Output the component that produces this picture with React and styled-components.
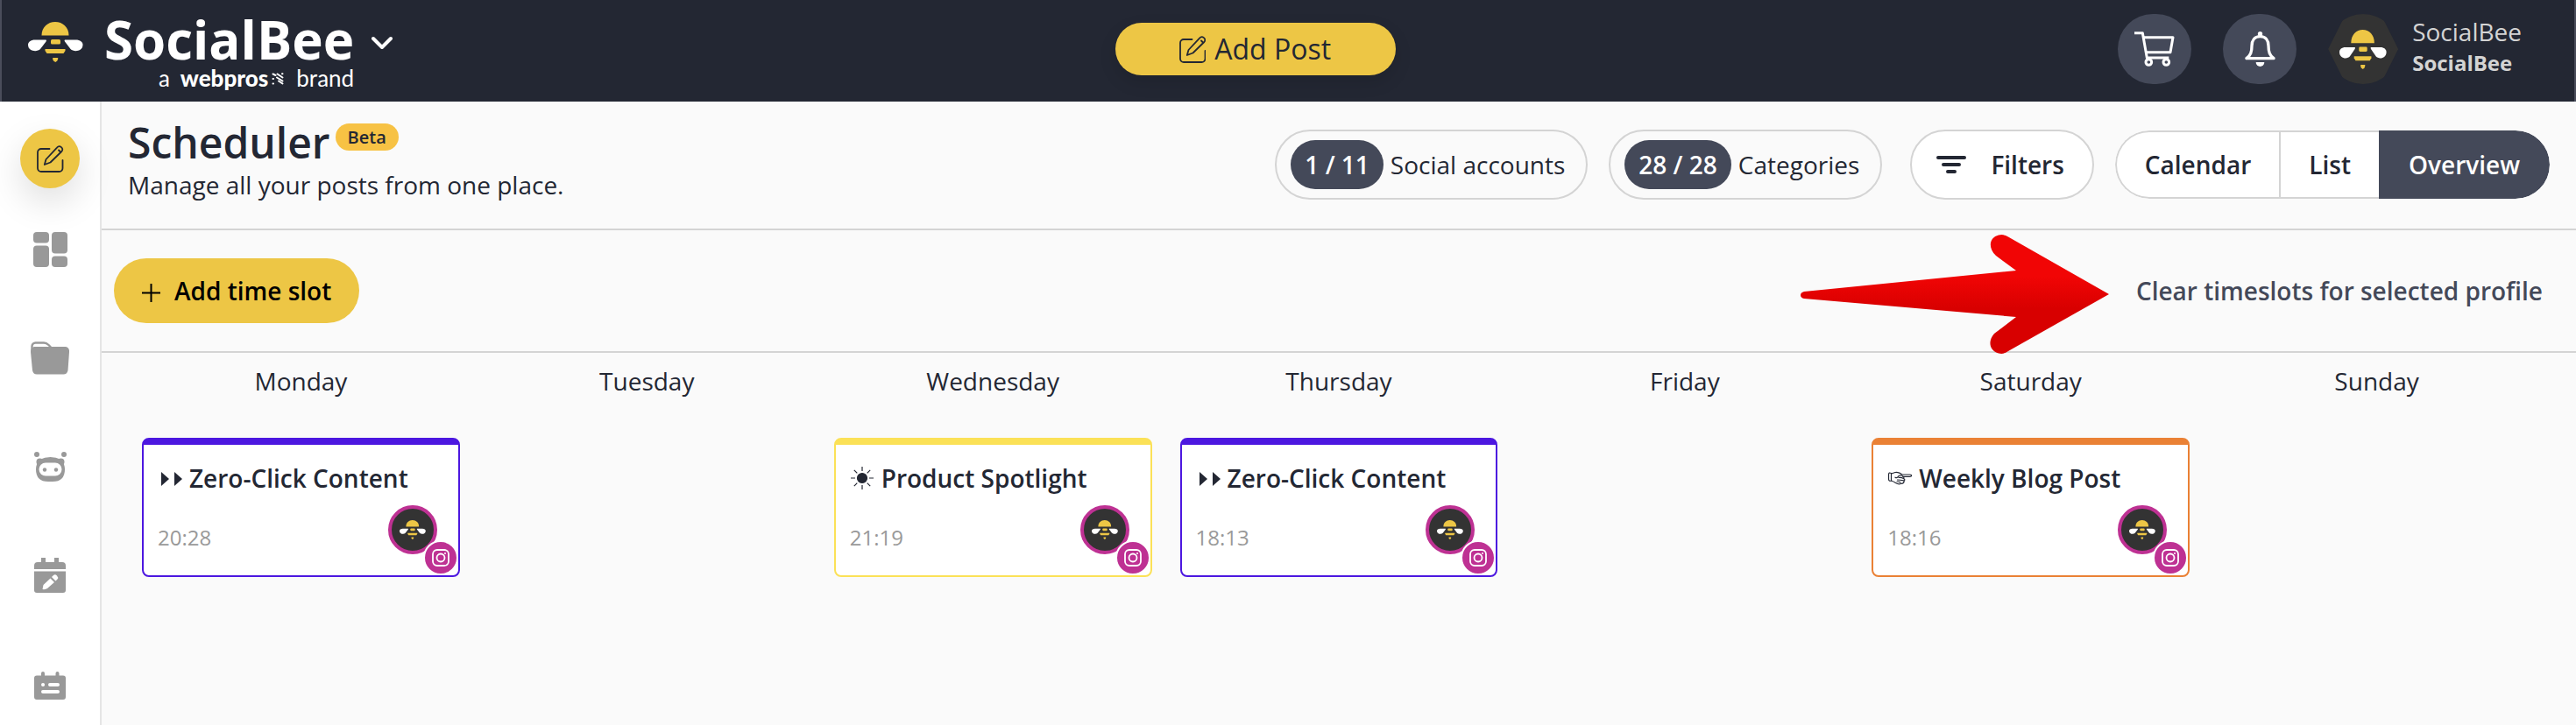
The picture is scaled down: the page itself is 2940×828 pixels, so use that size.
import styled, { createGlobalStyle } from "styled-components";

const GlobalStyle = createGlobalStyle`
   *{
      box-sizing: border-box;
   }
   body{
      margin: 0;
      background: #fafafa;
      color: #232733;
      font-family: "Open Sans", "Noto Sans", sans-serif;
      font-size: 28px;
      line-height: 38px;
   }
   button{
      font: inherit;
      color: inherit;
      border: none;
      margin: 0;
      padding: 0;
      background: none;
      cursor: pointer;
      white-space: nowrap;
   }
   a{
      color: inherit;
      text-decoration: none;
   }
   svg{
      display: block;
      flex-shrink: 0;
   }
   h1, h2, h3, p{
      margin: 0;
      font-size: inherit;
      font-weight: inherit;
   }
`
const Page = styled.div`
   min-height: 100vh;
   display: flex;
   flex-direction: column;
`
const TopBar = styled.header`
   height: 116px;
   padding: 0 60px 0 30px;
   display: flex;
   align-items: center;
   justify-content: space-between;
   background: #232733;
   border: solid #4a4d5b;
   border-width: 0 2px;
`
const Brand = styled.button`
   display: flex;
   align-items: flex-start;
   padding-top: 2px;
   color: white;
`
const BeeMark = styled.svg`
   margin-top: 10px;
`
const BrandText = styled.span`
   display: flex;
   flex-direction: column;
   align-items: flex-end;
   margin-left: 24px;
   margin-right: 20px;
`
const BrandName = styled.span`
   font-size: 60px;
   line-height: 60px;
   font-weight: 700;
`
const BrandTag = styled.span`
   display: flex;
   align-items: center;
   font-family: Lato, sans-serif;
   font-size: 26px;
   line-height: 28px;
   b{
      font-weight: 900;
      margin-left: 12px;
   }
   svg{
      margin: 2px 14px 0 4px;
   }
`
const Chevron = styled.svg`
   margin-top: 26px;
`
const BtnAddPost = styled.button`
   display: flex;
   align-items: center;
   justify-content: center;
   gap: 10px;
   width: 320px;
   height: 60px;
   margin-bottom: 4px;
   border-radius: 30px;
   background: #edc645;
   font-size: 32px;
   box-shadow: 0 8px 20px rgba(0, 0, 0, 0.12);
`
const Account = styled.div`
   display: flex;
   align-items: center;
   gap: 36px;
   margin-bottom: 4px;
`
const BtnRound = styled.button`
   display: flex;
   align-items: center;
   justify-content: center;
   width: 84px;
   height: 80px;
   border-radius: 40px;
   background: #444959;
`
const Profile = styled.a`
   display: flex;
   align-items: center;
   gap: 16px;
   color: #d4d4d4;
`
const HexAvatar = styled.span`
   display: flex;
   width: 80px;
   height: 80px;
   border-radius: 50%;
   overflow: hidden;
   span{
      display: flex;
      flex: 1;
      align-items: center;
      justify-content: center;
      background: #333;
      clip-path: polygon(25% 0, 75% 0, 100% 50%, 75% 100%, 25% 100%, 0 50%);
   }
`
const ProfileName = styled.span`
   display: flex;
   flex-direction: column;
   margin-bottom: 6px;
   b{
      font-size: 24px;
      line-height: 34px;
   }
`
const Body = styled.div`
   flex: 1;
   display: flex;
`
const SideBar = styled.nav`
   flex: 0 0 116px;
   display: flex;
   flex-direction: column;
   align-items: center;
   gap: 84px;
   padding-top: 31px;
   background: white;
   border-right: 2px solid #e5e5e5;
`
const SideLink = styled.a`
   display: flex;
   align-items: center;
   justify-content: center;
   height: 40px;
   color: #999;
`
const BtnCompose = styled.button`
   display: flex;
   align-items: center;
   justify-content: center;
   width: 68px;
   height: 68px;
   margin-bottom: -34px;
   border-radius: 50%;
   background: #edc645;
   box-shadow: 0 16px 40px rgba(0, 0, 0, 0.13);
`
const Main = styled.main`
   flex: 1;
   min-width: 0;
`
const PageHead = styled.section`
   display: flex;
   align-items: center;
   justify-content: space-between;
   height: 147px;
   padding: 0 30px;
   border-bottom: 2px solid #d4d4d4;
`
const Heading = styled.div`
   align-self: flex-start;
   padding-top: 18px;
`
const Title = styled.h1`
   display: flex;
   align-items: flex-start;
   gap: 6px;
   font-size: 48px;
   line-height: 58px;
   font-weight: 600;
`
const Beta = styled.span`
   margin-top: 7px;
   padding: 0 14px;
   border-radius: 16px;
   background: #f7c244;
   font-size: 20px;
   line-height: 31px;
`
const Controls = styled.div`
   display: flex;
   align-items: center;
   gap: 24px;
   margin-bottom: 2px;
`
const Pill = styled.button`
   display: flex;
   align-items: center;
   gap: 8px;
   height: 80px;
   padding: 0 24px 0 16px;
   border: 2px solid #d4d4d4;
   border-radius: 40px;
`
const Count = styled.span`
   padding: 0 16px;
   border-radius: 28px;
   background: #444959;
   color: white;
   font-weight: 600;
   line-height: 56px;
`
const BtnFilters = styled.button`
   display: flex;
   align-items: center;
   gap: 28px;
   height: 80px;
   margin-left: 8px;
   padding: 0 32px 0 28px;
   border: 2px solid #d4d4d4;
   border-radius: 40px;
   background: white;
   font-weight: 600;
`
const ViewSwitch = styled.div`
   display: flex;
   height: 78px;
   border-radius: 39px;
   overflow: hidden;
`
const BtnView = styled.button`
   padding: 0 32px;
   border: 2px solid ${({ $active }) => ($active ? "#444959" : "#d4d4d4")};
   border-right-width: ${({ $active }) => ($active ? "2px" : "0")};
   background: ${({ $active }) => ($active ? "#444959" : "white")};
   color: ${({ $active }) => ($active ? "white" : "#232733")};
   font-weight: 600;
   &:first-child{
      border-radius: 39px 0 0 39px;
   }
   &:last-child{
      border-radius: 0 39px 39px 0;
   }
`
const Toolbar = styled.section`
   display: flex;
   align-items: center;
   justify-content: space-between;
   height: 140px;
   padding: 0 38px 0 14px;
   border-bottom: 2px solid #d4d4d4;
`
const BtnAddSlot = styled.button`
   display: flex;
   align-items: center;
   gap: 16px;
   height: 74px;
   padding: 0 32px;
   border-radius: 37px;
   background: #edc645;
   color: black;
   font-weight: 600;
   svg{
      margin-top: 4px;
   }
`
const ClearBox = styled.div`
   position: relative;
`
const BtnClear = styled.button`
   color: #444959;
   font-weight: 600;
`
const Pointer = styled.svg`
   position: absolute;
   right: 100%;
   top: 50%;
   margin-right: 31px;
   transform: translateY(-50%);
`
const Week = styled.section`
   display: grid;
   grid-template-columns: repeat(7, 1fr);
   padding: 13px 30px;
`
const Day = styled.div`
   display: flex;
   flex-direction: column;
   gap: 46px;
   padding: 0 16px;
`
const DayName = styled.h2`
   text-align: center;
`
const Card = styled.article`
   padding: 19px 24px 24px 16px;
   border: 2px solid ${({ $color }) => $color};
   border-top-width: 8px;
   border-radius: 8px;
   background: white;
`
const CardTitle = styled.h3`
   display: flex;
   align-items: center;
   gap: 8px;
   font-weight: 600;
   white-space: nowrap;
`
const CardFoot = styled.div`
   display: flex;
   align-items: flex-end;
   justify-content: space-between;
   margin-top: 12px;
   color: #999;
   font-size: 24px;
`
const Avatar = styled.span`
   position: relative;
   display: flex;
   align-items: center;
   justify-content: center;
   width: 56px;
   height: 56px;
   border: 4px solid #be3193;
   border-radius: 50%;
   background: #333;
`
const NetworkBadge = styled.span`
   position: absolute;
   right: -28px;
   bottom: -28px;
   display: flex;
   align-items: center;
   justify-content: center;
   width: 40px;
   height: 40px;
   border: 2px solid white;
   border-radius: 50%;
   background: #be3193;
`

function BeeShapes() {
   return (
      <>
         <path d="M15.5 15.5C15.5 6 22.500 0 31 0s15.500 6 15.500 15.500z" fill="#edc645" />
         <rect x="26" y="20" width="11" height="5.500" rx="1.500" fill="#edc645" />
         <path d="M19.500 31h23v2l-2 3h-19l-2-3z" fill="#edc645" />
         <path d="M28 42q0-1 1-1h4.500q1 0 .8 1l-1 2.500-2 1.500-2.300-1.500z" fill="#edc645" />
         <path d="M8 20.500h12.500q1 .5 0 2L14 31c-4 4-14 2.500-14-5 0-3 3-5.500 8-5.500z" fill="white" />
         <path d="M54.500 20.500H42q-1 .5 0 2l6.500 8.500c4 4 14 2.500 14-5 0-3-3-5.500-8-5.500z" fill="white" />
      </>
   );
}

function EditIcon({ width = 30, height = 31 }) {
   return (
      <svg width={width} height={height} viewBox="0 0 30 31" fill="none" stroke="#232733" strokeWidth="1.800" strokeLinecap="round" strokeLinejoin="round">
         <path d="M14.500 4H5a4 4 0 0 0-4 4v18a4 4 0 0 0 4 4h20.500a4 4 0 0 0 4-4v-9" />
         <path d="M8.800 22l1.700-6L23 2.600c3-3.400 8.500.6 5.300 4.400L15.500 19.500z" />
         <path d="M25 5.500l1.500 1.500" />
      </svg>
   );
}

const cardIcons = {
   forward: (
      <svg width="28" height="28" viewBox="0 0 28 28" fill="#232733">
         <path d="M4 7l9 8-9 8zM19 7l9 8-9 8z" />
      </svg>
   ),
   sun: (
      <svg width="28" height="28" viewBox="0 0 28 28" stroke="#232733" strokeWidth="1.200">
         <circle cx="14" cy="14" r="5.500" fill="#232733" />
         <path d="M14 1v5M14 22v5M1 14h5M22 14h5M4.800 4.800l3.500 3.500M19.700 19.700l3.500 3.500M4.800 23.200l3.500-3.500M19.700 8.300l3.500-3.500" />
      </svg>
   ),
   hand: (
      <svg width="28" height="28" viewBox="0 0 28 28" fill="none" stroke="#232733" strokeWidth="1.200" strokeLinejoin="round" strokeLinecap="round">
         <path d="M4.500 8.500Q1.500 7 1.500 10v5q0 3 3 2z" />
         <path d="M4.500 9L9 7.500q4-1 8 2.500h8.500q2.500.2 2 1.400-.3 1-2 1H18" />
         <path d="M4.500 17q3 1 5 2.500 3 2 6 1 4-.5 3.500-3 1.800-1.800-.2-2.800.5-1.800-.8-2.500-1.500-2-4.500-1-2.500 3.500-4.500 2" />
         <path d="M11 18q3 0 4 1M11.500 16q3 0 7 .8M13 13.500q3-.5 5.500 1" />
      </svg>
   ),
};

const week = [
   { day: "Monday", slot: { icon: "forward", title: "Zero-Click Content", time: "20:28", color: "#4c17e0" } },
   { day: "Tuesday" },
   { day: "Wednesday", slot: { icon: "sun", title: "Product Spotlight", time: "21:19", color: "#fbe157" } },
   { day: "Thursday", slot: { icon: "forward", title: "Zero-Click Content", time: "18:13", color: "#4c17e0" } },
   { day: "Friday" },
   { day: "Saturday", slot: { icon: "hand", title: "Weekly Blog Post", time: "18:16", color: "#ea8135" } },
   { day: "Sunday" },
];

function SlotCard({ icon, title, time, color }) {
   return (
      <Card $color={color}>
         <CardTitle>{cardIcons[icon]}{title}</CardTitle>
         <CardFoot>
            <time>{time}</time>
            <Avatar>
               <svg width="30" height="22" viewBox="0 0 63 46"><BeeShapes /></svg>
               <NetworkBadge>
                  <svg width="20" height="20" viewBox="0 0 20 20" fill="none" stroke="white" strokeWidth="1.800">
                     <rect x="1" y="1" width="18" height="18" rx="5" />
                     <circle cx="10" cy="10" r="4.500" />
                     <circle cx="15" cy="5" r="1" fill="white" stroke="none" />
                  </svg>
               </NetworkBadge>
            </Avatar>
         </CardFoot>
      </Card>
   );
}

function Header() {
   return (
      <TopBar>
         <Brand aria-label="SocialBee menu">
            <BeeMark width="63" height="46" viewBox="0 0 63 46"><BeeShapes /></BeeMark>
            <BrandText>
               <BrandName>SocialBee</BrandName>
               <BrandTag>
                  a <b>webpros</b>
                  <svg width="14" height="14" viewBox="0 0 14 14" fill="none" stroke="white" strokeWidth="2" strokeLinecap="round">
                     <path d="M1.500 1.500l3 1.500M6.500 1.500l6 4M12 1.200h.5M6 5.500l6.500 4M8 9.500l4.500 3M1.500 7h.5M1.500 12.500h.5" />
                  </svg>
                  brand
               </BrandTag>
            </BrandText>
            <Chevron width="24" height="16" viewBox="0 0 24 16" fill="none" stroke="white" strokeWidth="4" strokeLinecap="round" strokeLinejoin="round">
               <path d="M2 3l10 10L22 3" />
            </Chevron>
         </Brand>

         <BtnAddPost><EditIcon />Add Post</BtnAddPost>

         <Account>
            <BtnRound aria-label="Cart">
               <svg width="46" height="40" viewBox="0 0 138 120" fill="none" stroke="white" strokeWidth="9" strokeLinejoin="round">
                  <path d="M0 5h28l15 85h75" />
                  <path d="M30 20h102l-9 51H39" />
                  <circle cx="49" cy="105" r="10" />
                  <circle cx="109" cy="105" r="10" />
               </svg>
            </BtnRound>
            <BtnRound aria-label="Notifications">
               <svg width="35" height="40" viewBox="0 0 105 120" fill="none" stroke="white" strokeWidth="10" strokeLinejoin="round">
                  <path d="M52.500 17C33 17 24 31 24 49c0 22-4 32-18 43h93C85 81 81 71 81 49c0-18-9-32-28.500-32z" />
                  <circle cx="52.500" cy="8" r="8" fill="white" stroke="none" />
                  <path d="M38 105h29a14.500 15 0 0 1-29 0z" fill="white" stroke="none" />
               </svg>
            </BtnRound>
            <Profile href="#profile">
               <HexAvatar>
                  <span>
                     <svg width="54" height="45" viewBox="0 0 63 46" preserveAspectRatio="none"><BeeShapes /></svg>
                  </span>
               </HexAvatar>
               <ProfileName>SocialBee<b>SocialBee</b></ProfileName>
            </Profile>
         </Account>
      </TopBar>
   );
}

function SideNav() {
   return (
      <SideBar>
         <BtnCompose aria-label="Add post"><EditIcon width={32} height={31} /></BtnCompose>
         <SideLink href="#dashboard" aria-label="Dashboard">
            <svg width="39" height="40" viewBox="0 0 39 40" fill="currentColor">
               <rect width="18" height="12.500" rx="4" />
               <rect y="15.500" width="18" height="24.500" rx="4" />
               <rect x="21" width="18" height="24.500" rx="4" />
               <rect x="21" y="27.500" width="18" height="12.500" rx="4" />
            </svg>
         </SideLink>
         <SideLink href="#content" aria-label="Content">
            <svg width="44" height="38" viewBox="0 0 44 38" fill="currentColor">
               <path d="M1.500 12V5.500a4 4 0 0 1 4-4H15c3 0 4 1 5.500 2.500L23 6.500" fill="none" stroke="currentColor" strokeWidth="2.400" />
               <path d="M4 6h36q4.500 1 4 6l-1.500 21q-1 4.500-5 4.500H7q-4 0-5-4.500L0 12q0-5 4-6z" />
            </svg>
         </SideLink>
         <SideLink href="#copilot" aria-label="Copilot">
            <svg width="37" height="34" viewBox="0 0 37 34" fill="currentColor">
               <circle cx="3" cy="3" r="3" />
               <circle cx="34" cy="3" r="3" />
               <circle cx="6.500" cy="11.500" r="4" />
               <circle cx="30.500" cy="11.500" r="4" />
               <path d="M6 9Q18.500 3 31 9q4 5 4 11 0 14-14 14h-5Q2 34 2 20 2 14 6 9z" />
               <rect x="5.500" y="12.500" width="26" height="15" rx="7.500" fill="white" />
               <circle cx="12" cy="20.500" r="2.200" />
               <circle cx="25" cy="20.500" r="2.200" />
            </svg>
         </SideLink>
         <SideLink href="#scheduler" aria-label="Scheduler">
            <svg width="36" height="40" viewBox="0 0 36 40" fill="currentColor">
               <path d="M8 5V0h5v5h10V0h5v5h4q4 0 4 4v4H0V9q0-4 4-4zM0 15.500h36V37q0 3-3 3H3q-3 0-3-3z" />
               <path d="M9.500 36l1-5 8-7.500 4.500 4.500-8 7q-2 1.500-5.500 1zM20 22l2-2q2-1.500 4 .5t.5 4l-2 2z" fill="white" />
            </svg>
         </SideLink>
         <SideLink href="#planner" aria-label="Planner">
            <svg width="36" height="36" viewBox="0 -4 36 36" fill="currentColor">
               <path d="M8 4.500V2q0-2 2-2t2 2v2.500h12.500V2q0-2 2-2t2 2v2.500H33q3 0 3 3V29q0 3-3 3H3q-3 0-3-3V7.500q0-3 3-3z" />
               <path d="M10 15h.1M18 15h9M10 23h17" stroke="white" strokeWidth="4" strokeLinecap="round" />
            </svg>
         </SideLink>
      </SideBar>
   );
}

export default function App() {
   return (
      <Page>
         <GlobalStyle />
         <Header />
         <Body>
            <SideNav />
            <Main>
               <PageHead>
                  <Heading>
                     <Title>Scheduler<Beta>Beta</Beta></Title>
                     <p>Manage all your posts from one place.</p>
                  </Heading>
                  <Controls>
                     <Pill><Count>1 / 11</Count>Social accounts</Pill>
                     <Pill><Count>28 / 28</Count>Categories</Pill>
                     <BtnFilters>
                        <svg width="34" height="20" viewBox="0 0 34 20" stroke="#232733" strokeWidth="4" strokeLinecap="round">
                           <path d="M2 2h30M8 10h18M13 18h8" />
                        </svg>
                        Filters
                     </BtnFilters>
                     <ViewSwitch>
                        <BtnView>Calendar</BtnView>
                        <BtnView>List</BtnView>
                        <BtnView $active>Overview</BtnView>
                     </ViewSwitch>
                  </Controls>
               </PageHead>

               <Toolbar>
                  <BtnAddSlot>
                     <svg width="21" height="21" viewBox="0 0 21 21" stroke="black" strokeWidth="2">
                        <path d="M10.500 0v21M0 10.500h21" />
                     </svg>
                     Add time slot
                  </BtnAddSlot>
                  <ClearBox>
                     <Pointer width="352" height="144" viewBox="0 -8 352 144">
                        <defs>
                           <linearGradient id="pointerFill" x1="0" y1="0" x2="0" y2="1">
                              <stop offset="0.350" stopColor="#f10505" />
                              <stop offset="0.620" stopColor="#d80000" />
                           </linearGradient>
                        </defs>
                        <path
                           d="M4 65L246 41 223 24C213 14 216 3 226 .5q6-1.500 11 2L352 68 237 133q-5 4-11 2.500C216 133 213 122 221 113L246 94 4 73q-4-1-4-4t4-4z"
                           fill="url(#pointerFill)"
                        />
                     </Pointer>
                     <BtnClear>Clear timeslots for selected profile</BtnClear>
                  </ClearBox>
               </Toolbar>

               <Week>
                  {week.map(({ day, slot }) => (
                     <Day key={day}>
                        <DayName>{day}</DayName>
                        {slot && <SlotCard {...slot} />}
                     </Day>
                  ))}
               </Week>
            </Main>
         </Body>
      </Page>
   );
}
